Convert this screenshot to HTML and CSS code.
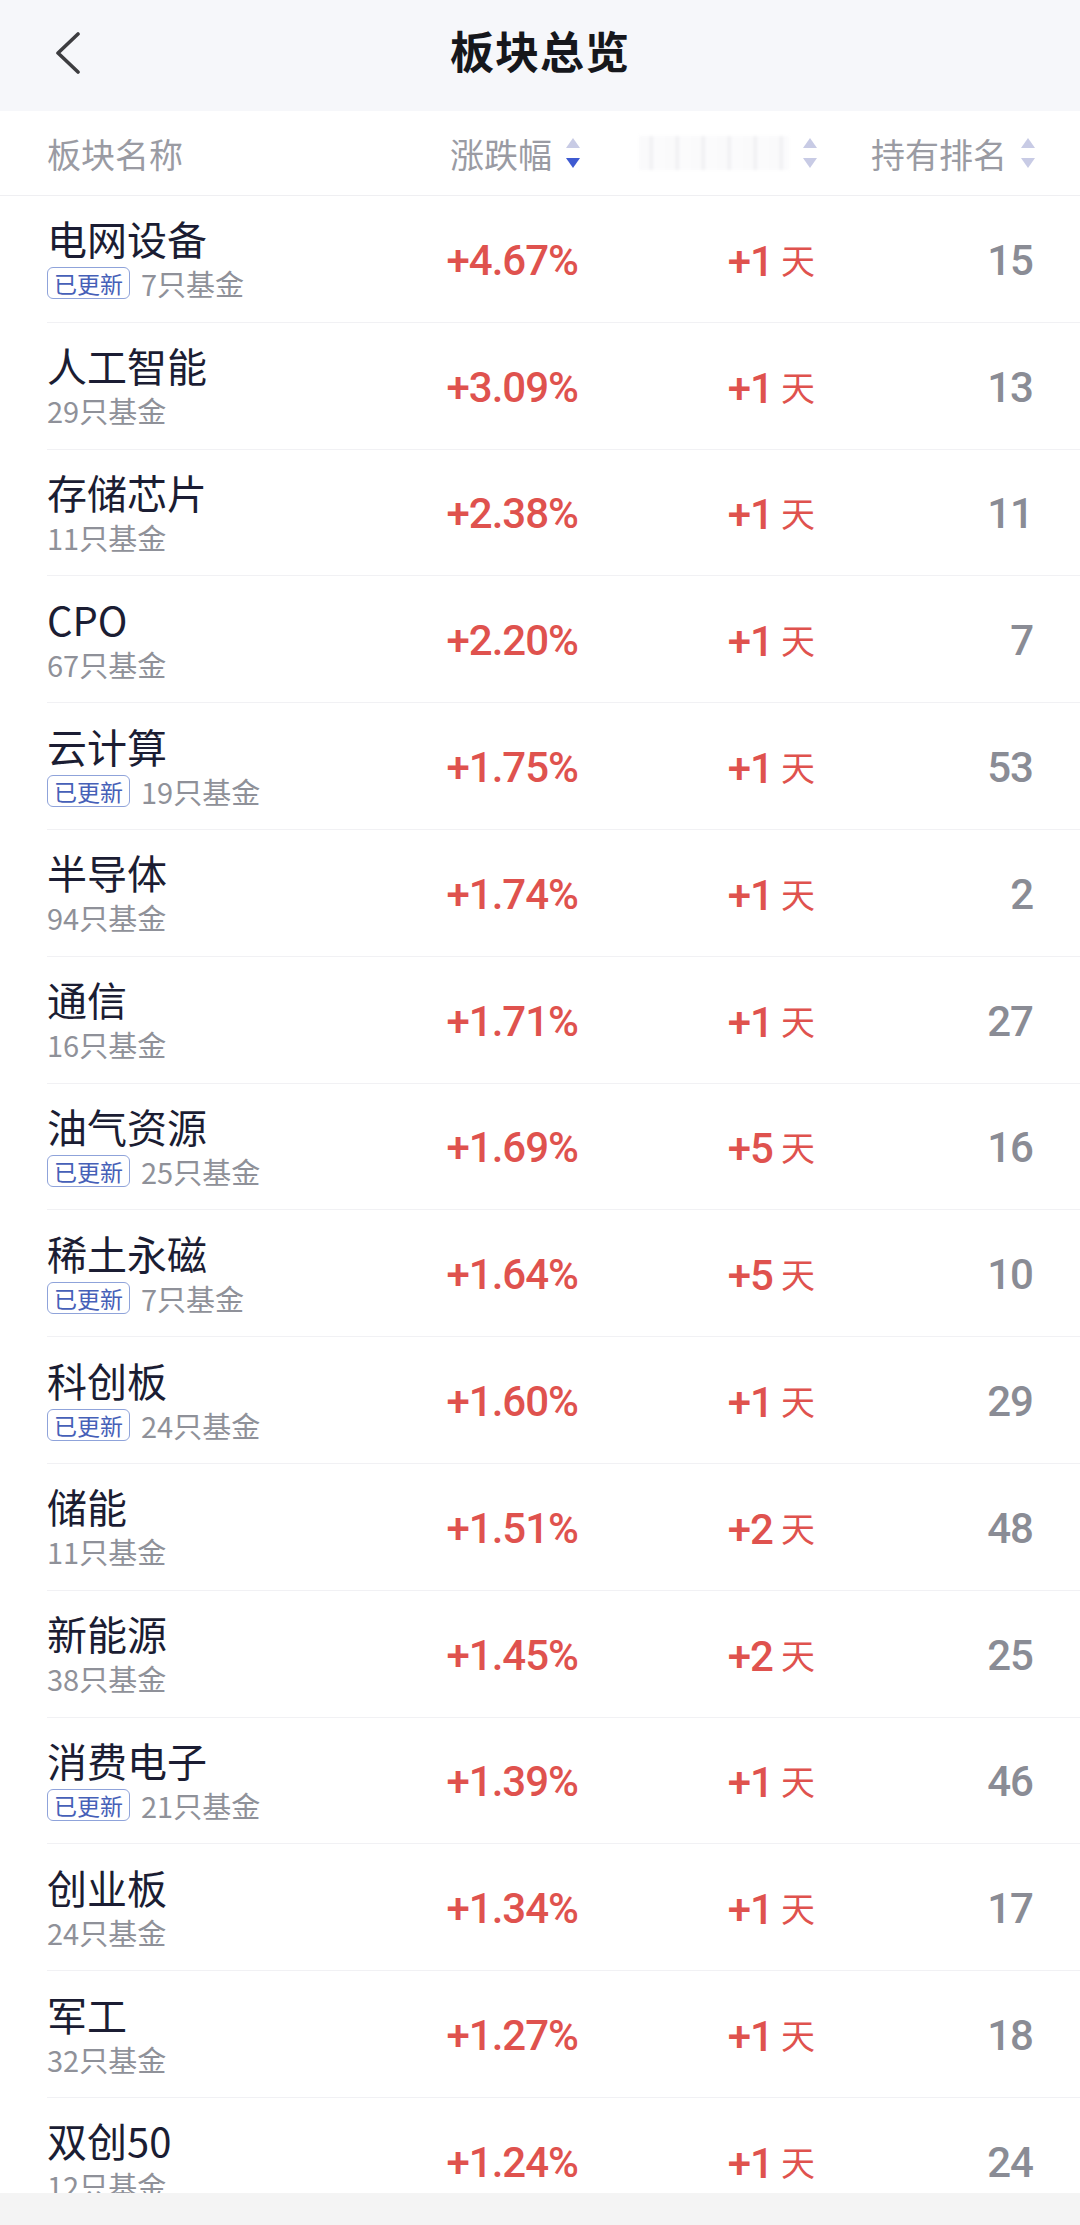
FILE: index.html
```html
<!DOCTYPE html>
<html lang="zh-CN">
  <head>
    <meta charset="UTF-8" />
    <meta name="viewport" content="width=device-width, initial-scale=1.0" />
    <title>板块总览</title>
    <link rel="stylesheet" href="styles.css">
  </head>
  <body>
    <div class="page">
      <div class="top-bar">
        <button class="back-button">
          <svg class="back-icon" viewBox="0 0 26 42">
            <polyline points="23,2 3,21 23,40" />
          </svg>
        </button>
        <p class="title">板块总览</p>
        <span></span>
      </div>

      <div class="table-head">
        <span class="head-name">板块名称</span>
        <span class="head-cell">
          涨跌幅
          <svg class="sort-icon" viewBox="0 0 14 30">
            <path d="M7 0 L14 10 L0 10 Z" class="sort-up" />
            <path d="M0 20 L14 20 L7 30 Z" class="sort-down active" />
          </svg>
        </span>
        <span class="head-cell">
          <span class="blurred"></span>
          <svg class="sort-icon" viewBox="0 0 14 30">
            <path d="M7 0 L14 10 L0 10 Z" class="sort-up" />
            <path d="M0 20 L14 20 L7 30 Z" class="sort-down" />
          </svg>
        </span>
        <span class="head-cell">
          持有排名
          <svg class="sort-icon" viewBox="0 0 14 30">
            <path d="M7 0 L14 10 L0 10 Z" class="sort-up" />
            <path d="M0 20 L14 20 L7 30 Z" class="sort-down" />
          </svg>
        </span>
      </div>

      <div class="list">
        <div class="row">
          <div class="name-cell">
            <p class="name">电网设备</p>
            <p class="sub"><span class="tag">已更新</span>7只基金</p>
          </div>
          <span class="pct">+4.67%</span>
          <span class="days">+1<span class="day-unit">天</span></span>
          <span class="rank">15</span>
        </div>
        <div class="row">
          <div class="name-cell">
            <p class="name">人工智能</p>
            <p class="sub">29只基金</p>
          </div>
          <span class="pct">+3.09%</span>
          <span class="days">+1<span class="day-unit">天</span></span>
          <span class="rank">13</span>
        </div>
        <div class="row">
          <div class="name-cell">
            <p class="name">存储芯片</p>
            <p class="sub">11只基金</p>
          </div>
          <span class="pct">+2.38%</span>
          <span class="days">+1<span class="day-unit">天</span></span>
          <span class="rank">11</span>
        </div>
        <div class="row">
          <div class="name-cell">
            <p class="name">CPO</p>
            <p class="sub">67只基金</p>
          </div>
          <span class="pct">+2.20%</span>
          <span class="days">+1<span class="day-unit">天</span></span>
          <span class="rank">7</span>
        </div>
        <div class="row">
          <div class="name-cell">
            <p class="name">云计算</p>
            <p class="sub"><span class="tag">已更新</span>19只基金</p>
          </div>
          <span class="pct">+1.75%</span>
          <span class="days">+1<span class="day-unit">天</span></span>
          <span class="rank">53</span>
        </div>
        <div class="row">
          <div class="name-cell">
            <p class="name">半导体</p>
            <p class="sub">94只基金</p>
          </div>
          <span class="pct">+1.74%</span>
          <span class="days">+1<span class="day-unit">天</span></span>
          <span class="rank">2</span>
        </div>
        <div class="row">
          <div class="name-cell">
            <p class="name">通信</p>
            <p class="sub">16只基金</p>
          </div>
          <span class="pct">+1.71%</span>
          <span class="days">+1<span class="day-unit">天</span></span>
          <span class="rank">27</span>
        </div>
        <div class="row">
          <div class="name-cell">
            <p class="name">油气资源</p>
            <p class="sub"><span class="tag">已更新</span>25只基金</p>
          </div>
          <span class="pct">+1.69%</span>
          <span class="days">+5<span class="day-unit">天</span></span>
          <span class="rank">16</span>
        </div>
        <div class="row">
          <div class="name-cell">
            <p class="name">稀土永磁</p>
            <p class="sub"><span class="tag">已更新</span>7只基金</p>
          </div>
          <span class="pct">+1.64%</span>
          <span class="days">+5<span class="day-unit">天</span></span>
          <span class="rank">10</span>
        </div>
        <div class="row">
          <div class="name-cell">
            <p class="name">科创板</p>
            <p class="sub"><span class="tag">已更新</span>24只基金</p>
          </div>
          <span class="pct">+1.60%</span>
          <span class="days">+1<span class="day-unit">天</span></span>
          <span class="rank">29</span>
        </div>
        <div class="row">
          <div class="name-cell">
            <p class="name">储能</p>
            <p class="sub">11只基金</p>
          </div>
          <span class="pct">+1.51%</span>
          <span class="days">+2<span class="day-unit">天</span></span>
          <span class="rank">48</span>
        </div>
        <div class="row">
          <div class="name-cell">
            <p class="name">新能源</p>
            <p class="sub">38只基金</p>
          </div>
          <span class="pct">+1.45%</span>
          <span class="days">+2<span class="day-unit">天</span></span>
          <span class="rank">25</span>
        </div>
        <div class="row">
          <div class="name-cell">
            <p class="name">消费电子</p>
            <p class="sub"><span class="tag">已更新</span>21只基金</p>
          </div>
          <span class="pct">+1.39%</span>
          <span class="days">+1<span class="day-unit">天</span></span>
          <span class="rank">46</span>
        </div>
        <div class="row">
          <div class="name-cell">
            <p class="name">创业板</p>
            <p class="sub">24只基金</p>
          </div>
          <span class="pct">+1.34%</span>
          <span class="days">+1<span class="day-unit">天</span></span>
          <span class="rank">17</span>
        </div>
        <div class="row">
          <div class="name-cell">
            <p class="name">军工</p>
            <p class="sub">32只基金</p>
          </div>
          <span class="pct">+1.27%</span>
          <span class="days">+1<span class="day-unit">天</span></span>
          <span class="rank">18</span>
        </div>
        <div class="row">
          <div class="name-cell">
            <p class="name">双创50</p>
            <p class="sub">12只基金</p>
          </div>
          <span class="pct">+1.24%</span>
          <span class="days">+1<span class="day-unit">天</span></span>
          <span class="rank">24</span>
        </div>
      </div>

      <div class="bottom-bar"></div>
    </div>
  </body>
</html>
```

FILE: styles.css
```css
body {
  margin: 0;
  background-color: white;
  font-family: "Noto Sans CJK SC", sans-serif;
}

p {
  margin: 0;
}

.page {
  height: 2225px;
  display: flex;
  flex-direction: column;
  overflow: hidden;
}

/* top bar */
.top-bar {
  height: 111px;
  flex-shrink: 0;
  box-sizing: border-box;
  padding-bottom: 11px;
  background-color: #f6f7fa;
  display: grid;
  grid-template-columns: 1fr auto 1fr;
  align-items: center;
}

.back-button {
  justify-self: start;
  margin-left: 55px;
  margin-top: 6px;
  padding: 0;
  background-color: transparent;
  border: none;
  display: flex;
}

.back-icon {
  width: 26px;
  height: 42px;
  fill: none;
  stroke: #3d3d40;
  stroke-width: 3.6;
  stroke-linecap: round;
  stroke-linejoin: round;
}

.title {
  font-size: 44px;
  font-weight: bold;
  color: #16171c;
  letter-spacing: 1px;
}

/* table header */
.table-head {
  height: 85px;
  flex-shrink: 0;
  box-sizing: border-box;
  padding: 0 45px 0 47px;
  border-bottom: 1px solid #efeff2;
  display: grid;
  grid-template-columns: 303px 230px 237px 1fr;
  align-items: center;
  font-size: 34px;
  color: #9a9ba3;
}

.head-cell {
  display: flex;
  align-items: center;
  justify-content: flex-end;
  gap: 14px;
}

.sort-icon {
  width: 14px;
  height: 30px;
}

.sort-up,
.sort-down {
  fill: #c8cbe5;
}

.sort-down.active {
  fill: #3e5ad1;
}

/* the column title is blurred out in the source */
.blurred {
  width: 150px;
  height: 34px;
  background: repeating-linear-gradient(
    90deg,
    #fafafb 0px,
    #fafafb 10px,
    #ececef 12px,
    #fbfbfc 15px,
    #fbfbfc 26px
  );
  filter: blur(1.5px);
}

/* rows */
.list {
  flex: 1;
  overflow: hidden;
}

.row {
  height: 126.8px;
  box-sizing: border-box;
  margin-left: 47px;
  padding-right: 47px;
  padding-top: 3px;
  border-bottom: 1px solid #f1f1f4;
  display: grid;
  grid-template-columns: 303px 228px 237px 1fr;
  align-items: center;
}

.name {
  font-size: 40px;
  line-height: 46px;
  color: #1b1d33;
}

.sub {
  display: flex;
  align-items: center;
  font-size: 29px;
  line-height: 44px;
  color: #8f9199;
}

.tag {
  font-size: 23px;
  line-height: 30px;
  padding: 0 6px;
  margin-right: 11px;
  border: 1px solid #8fa3da;
  border-radius: 6px;
  color: #4660b8;
}

.pct,
.days,
.rank {
  text-align: right;
  font-family: Roboto, sans-serif;
  font-weight: 500;
  font-size: 42px;
  letter-spacing: -1px;
}

.pct,
.days {
  color: #df524e;
}

.day-unit {
  font-family: "Noto Sans CJK SC", sans-serif;
  font-weight: normal;
  font-size: 34px;
  margin-left: 8px;
  letter-spacing: 0;
  vertical-align: 2px;
}

.rank {
  color: #8a8c95;
}

.bottom-bar {
  height: 32px;
  flex-shrink: 0;
  background-color: #f4f4f4;
}
```
